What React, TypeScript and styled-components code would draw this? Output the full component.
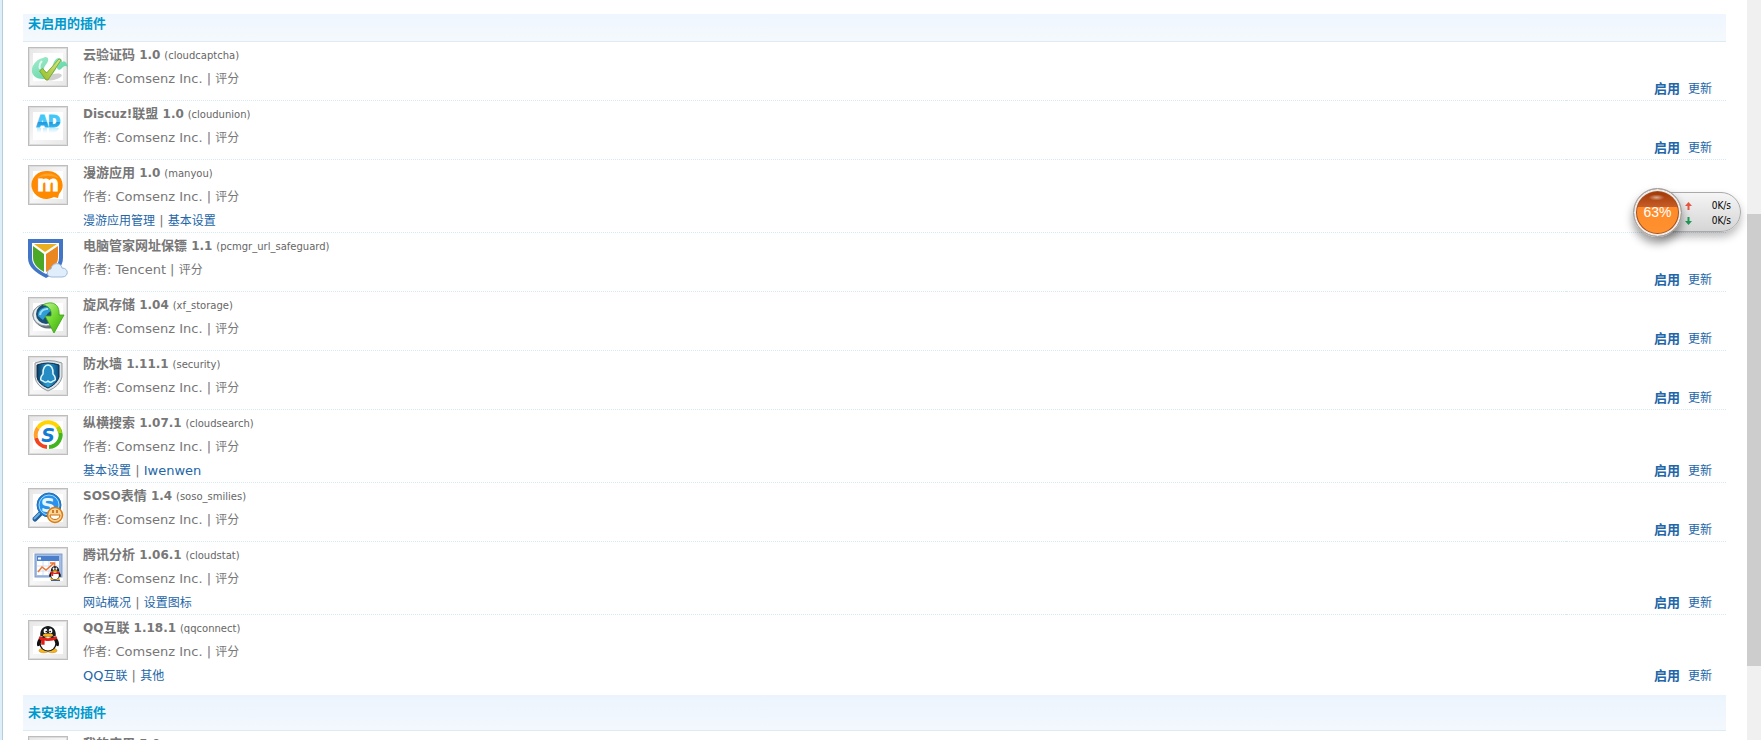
import React, { ReactNode } from "react";
import styled, { createGlobalStyle, css } from "styled-components";

const GlobalStyle = createGlobalStyle`
  html, body {
    margin: 0;
    background: #fff;
  }
  body {
    font-family: "DejaVu Sans", "Noto Sans CJK SC", sans-serif;
    font-size: 13px;
    line-height: 26px;
    color: #777;
  }
  * { box-sizing: border-box; }
`;

const Window = styled.div`
  display: flex;
  height: 100vh;
  overflow: hidden;
  position: relative;
`;

const LeftRail = styled.div`
  flex: none;
  width: 3px;
  background: #deeffa;
  border-right: 1px solid #b5cfd9;
`;

const Content = styled.main`
  flex: 1;
  min-width: 0;
  padding: 14px 21px 0 20px;
`;

const ScrollTrack = styled.div`
  flex: none;
  width: 14px;
  padding-top: 214px;
  background: #f0f0f0;
`;

const ScrollThumb = styled.div`
  height: 452px;
  background: #cdcdcd;
`;

const PluginTable = styled.table`
  width: 100%;
  border-collapse: separate;
  border-spacing: 0;
`;

const HeadCell = styled.th<{ $compact?: boolean }>`
  height: ${(p) => (p.$compact ? 28 : 36)}px;
  padding: ${(p) => (p.$compact ? "0 5px 7px" : "8px 5px 7px")};
  text-align: left;
  font-size: 13px;
  line-height: 20px;
  color: #09c;
  background: linear-gradient(
    ${(p) => (p.$compact ? "#eff6ff, #f4f9fc" : "#ebf4fc, #f0f6fe 50%, #f3f8fd")}
  );
  border-bottom: 1px solid #deeaf5;
`;

const rule = css<{ $last?: boolean }>`
  border-bottom: ${(p) => (p.$last ? "0" : "1px dotted #d5e8f5")};
`;

const IconCell = styled.td<{ $last?: boolean }>`
  ${rule}
  width: 55px;
  height: ${(p) => (p.$last ? 80 : 59)}px;
  padding: 5px 0 0 5px;
  vertical-align: top;
`;

const InfoCell = styled.td<{ $last?: boolean }>`
  ${rule}
  padding: 0 5px;
  vertical-align: top;
`;

const ActionCell = styled.td<{ $last?: boolean }>`
  ${rule}
  width: 160px;
  padding: 0 14px ${(p) => (p.$last ? 8 : 0)}px 0;
  vertical-align: bottom;
`;

const Line = styled.div`
  height: 24px;
  white-space: nowrap;
`;

const Title = styled(Line)`
  font-size: 12px;
`;

const Han = styled.span<{ $bold?: boolean }>`
  font-size: ${(p) => (p.$bold ? 13 : 12)}px;
`;

const Ident = styled.span`
  font-size: 10px;
  color: #666;
`;

const Link = styled.a<{ $bold?: boolean }>`
  color: #2366a8;
  text-decoration: none;
  font-weight: ${(p) => (p.$bold ? 700 : 400)};
`;

const Actions = styled.div`
  display: flex;
  justify-content: flex-end;
  gap: 8px;
  height: 24px;
`;

const Art = styled.svg`
  display: block;
  width: 40px;
  height: 40px;
`;

/* Chinese runs are set at their own size next to the Latin text. */
function Mixed({ text, bold }: { text: string; bold?: boolean }) {
  return (
    <>
      {text.split(/([\u4e00-\u9fff]+)/).map((part, i) =>
        i % 2 ? (
          <Han key={i} $bold={bold}>
            {part}
          </Han>
        ) : (
          part
        )
      )}
    </>
  );
}

function Framed({ children }: { children?: ReactNode }) {
  return (
    <Art viewBox="0 0 40 40" aria-hidden="true">
      <defs>
        <linearGradient id="frame" x1="0" y1="0" x2="1" y2="1">
          <stop offset="0" stopColor="#e6e6e6" />
          <stop offset=".5" stopColor="#f6f6f6" />
          <stop offset="1" stopColor="#e6e6e6" />
        </linearGradient>
      </defs>
      <rect x=".5" y=".5" width="39" height="39" fill="url(#frame)" stroke="#bdbdbd" />
      <rect x="1.5" y="1.5" width="37" height="37" fill="none" stroke="#dcdcdc" />
      <rect x="5" y="6" width="30" height="28" fill="#fff" />
      {children}
    </Art>
  );
}

const CaptchaIcon = () => (
  <Framed>
    <defs>
      <linearGradient id="leaf" x1="0" y1="0" x2="1" y2="1">
        <stop offset="0" stopColor="#a6ecd0" />
        <stop offset="1" stopColor="#4fd09a" />
      </linearGradient>
      <linearGradient id="tick" x1="1" y1="0" x2="0" y2="1">
        <stop offset="0" stopColor="#dbe887" />
        <stop offset="1" stopColor="#91bd22" />
      </linearGradient>
    </defs>
    <path d="M15 11c4-3 7 1 4 5-3 4-4 6-2 8 3 3 7-1 8-6 1-5 5-9 8-6 1 1 1 2 1 3 3-2 5 1 6 5-3-2-4-1-6 1-2 3-5 2-5-1-3 6-8 12-14 12-8 0-12-5-11-10 1-6 6-10 11-11Z" fill="url(#leaf)" />
    <path d="M14 14c-2 2-3 5-2 8" fill="none" stroke="#e2f9ef" strokeWidth="2" />
    <ellipse cx="25" cy="30" rx="9" ry="3" fill="#777" opacity=".35" transform="rotate(-12 25 30)" />
    <path d="M11.500 24l3-2.500 4 4.500L31 12l2 1-13 20h-2Z" fill="url(#tick)" stroke="#789d2a" strokeWidth=".8" />
  </Framed>
);

const AdIcon = () => (
  <Framed>
    <defs>
      <linearGradient id="ad" x1="0" y1="0" x2="0" y2="1">
        <stop offset="0" stopColor="#36c9f5" />
        <stop offset=".5" stopColor="#4cc5f7" />
        <stop offset=".55" stopColor="#2197dd" />
        <stop offset="1" stopColor="#35d0fa" />
      </linearGradient>
      <linearGradient id="adGlow" x1="0" y1="0" x2="0" y2="1">
        <stop offset="0" stopColor="#c3ebfa" />
        <stop offset="1" stopColor="#fff" />
      </linearGradient>
    </defs>
    <text x="20.500" y="20.500" textAnchor="middle" fontFamily="DejaVu Sans" fontWeight="700" fontSize="15" fill="url(#ad)" stroke="url(#ad)" strokeWidth="1">AD</text>
    <path d="M9 22h4v4H9zM15 22h4v5h-4zM21 22h10c-1 3-3 4-6 5h-4z" fill="url(#adGlow)" />
  </Framed>
);

const ManyouIcon = () => (
  <Framed>
    <path d="M20 6a15 14 0 0 1 11 23l-1 4-4-1A15 14 0 1 1 20 6Z" fill="#ff8a00" />
    <path d="M9 13A14 12 0 0 1 31 13Q20 9 9 13Z" fill="#ffa42a" />
    <text x="20" y="26" textAnchor="middle" fontFamily="DejaVu Sans" fontWeight="700" fontSize="21" fill="#fff" stroke="#fff" strokeWidth="1">m</text>
  </Framed>
);

const GuardIcon = () => (
  <Art viewBox="0 0 40 40" aria-hidden="true">
    <path d="M0 1h35v19c0 9-7 15-17 20C8 35 0 29 0 20Z" fill="#4275c6" />
    <path d="M4 5h27v15c0 7-6 12-13 16C10 32 4 27 4 20Z" fill="#fff" />
    <path d="M6 6h23l-12 8Z" fill="#eab020" />
    <path d="M5 8l11 8v18C8 29 5 25 5 19Z" fill="#4ca928" />
    <path d="M30 8l-12 8v18c9-5 12-9 12-15Z" fill="#ea8720" />
    <path d="M24 39c-6 0-6-7-1-8 1-7 10-7 11-1 7 0 7 9 0 9Z" fill="#e0edfa" stroke="#9fb9dc" />
  </Art>
);

const StorageIcon = () => (
  <Framed>
    <defs>
      <linearGradient id="arrow" x1="0" y1="0" x2="1" y2="1">
        <stop offset="0" stopColor="#c5f59a" />
        <stop offset=".5" stopColor="#6fd72f" />
        <stop offset="1" stopColor="#35a40d" />
      </linearGradient>
    </defs>
    <ellipse cx="18" cy="20" rx="14" ry="11" fill="#66727a" transform="rotate(25 18 20)" />
    <ellipse cx="18" cy="18" rx="13" ry="11" fill="#e8edef" stroke="#8b959b" />
    <circle cx="18" cy="17" r="10" fill="#1b4f74" />
    <path d="M10 19a8 8 0 0 1 14-6l-4 3-5 7Z" fill="#2f9ed8" />
    <path d="M12 18a7 7 0 0 1 8-6" fill="none" stroke="#9be0fa" strokeWidth="2" />
    <path d="M15 8c9-5 17-1 16 10h5L26 36 17 19h6c1-6-2-10-8-11Z" fill="url(#arrow)" stroke="#3ca315" strokeWidth=".8" />
  </Framed>
);

const SecurityIcon = () => (
  <Framed>
    <defs>
      <linearGradient id="shield" x1="0" y1="0" x2="1" y2="0">
        <stop offset="0" stopColor="#0a3b63" />
        <stop offset=".5" stopColor="#2ba2d8" />
        <stop offset="1" stopColor="#0d4f80" />
      </linearGradient>
    </defs>
    <path d="M7 7q13-5 27 0v14q-2 9-14 14Q8 30 7 21Z" fill="#dfe4e7" stroke="#8f989e" />
    <path d="M9 9q11-4 22 0v12q-2 7-11 11Q10 28 9 21Z" fill="url(#shield)" stroke="#0b2b47" />
    <path d="M15 25c-4 0-2-5 0-7-1-12 11-12 10 0 2 2 4 7 0 7-2 2-4 1-5 0-1 1-3 2-5 0Z" fill="#258dc4" stroke="#dff6ff" strokeWidth="1.500" />
  </Framed>
);

const SearchIcon = () => (
  <Framed>
    <g fill="none" strokeWidth="4">
      <path d="M10 13A12 12 0 0 1 31 14" stroke="#ffd400" />
      <path d="M31 14A12 12 0 0 1 21 32" stroke="#42b51f" />
      <path d="M19 32A12 12 0 0 1 8 23" stroke="#f04420" />
      <path d="M8 23A12 12 0 0 1 10 13" stroke="#ffa12a" />
      <path d="M30 12A12 12 0 0 1 32 18" stroke="#a8d20a" />
    </g>
    <circle cx="20" cy="20" r="10" fill="#fff" />
    <text x="20" y="27" textAnchor="middle" fontFamily="DejaVu Sans" fontStyle="italic" fontWeight="700" fontSize="19" fill="#137bd2">S</text>
  </Framed>
);

const SmileyIcon = () => (
  <Framed>
    <path d="M13 25l-6 6" stroke="#215d98" strokeWidth="5" strokeLinecap="round" />
    <path d="M12 25l-6 6" stroke="#63aee6" strokeWidth="2" />
    <circle cx="21" cy="17" r="12" fill="#2080d5" stroke="#2370b8" />
    <circle cx="21" cy="17" r="10" fill="#2992ec" stroke="#a5dcff" />
    <text x="20" y="24" textAnchor="middle" fontFamily="DejaVu Sans" fontWeight="700" fontSize="20" fill="#e8f7ff">S</text>
    <circle cx="27" cy="27" r="7.500" fill="#ffd596" stroke="#d87b12" strokeWidth="1.500" />
    <path d="M22 27h10c0 6-10 6-10 0Z" fill="#fff" stroke="#c66d0d" />
    <path d="M25 22v3M29 22v3" stroke="#b9620b" strokeWidth="1.500" />
  </Framed>
);

const Penguin = () => (
  <g>
    <ellipse cx="15" cy="36" rx="5.500" ry="2.500" fill="#f6b51c" stroke="#c87508" strokeWidth=".6" />
    <ellipse cx="25" cy="36" rx="5.500" ry="2.500" fill="#f6b51c" stroke="#c87508" strokeWidth=".6" />
    <path d="M12 19C7 23 6 29 8 31c2 0 3-2 4-4M28 19c5 4 6 10 4 12-2 0-3-2-4-4" fill="#111" />
    <ellipse cx="20" cy="27" rx="10.500" ry="10" fill="#161616" />
    <ellipse cx="20" cy="28" rx="8.500" ry="8" fill="#fff" />
    <path d="M11 19c-2-16 20-16 18 0Z" fill="#17191c" />
    <ellipse cx="17" cy="13" rx="2.200" ry="3" fill="#fff" />
    <ellipse cx="23" cy="13" rx="2.200" ry="3" fill="#fff" />
    <circle cx="18" cy="13.500" r="1" fill="#111" />
    <circle cx="22.500" cy="13.500" r="1" fill="#111" />
    <path d="M10 19q10 5 20 0l1 3q-8 4-15 2v5h-4v-5l-3-2Z" fill="#e21d16" />
    <ellipse cx="20" cy="18" rx="6" ry="2" fill="#f8b11c" />
  </g>
);

const StatIcon = () => (
  <Framed>
    <rect x="7" y="7" width="27" height="23" fill="#a5bde3" stroke="#7b9bcb" />
    <rect x="9" y="14" width="22" height="14" fill="#fff" />
    <rect x="9" y="9" width="22" height="5" fill="#4b7fcc" />
    <path d="M10 11.500h3" stroke="#fff" strokeWidth="2" />
    <path d="M15 14v14M21 14v14M27 14v14M9 19h22M9 24h22" stroke="#d0dff2" />
    <path d="M10 25l4-5 4 3 8-7M22 16h4.500v4" fill="none" stroke="#ee7630" strokeWidth="1.500" />
    <g transform="translate(18 16) scale(.45)">
      <Penguin />
    </g>
    <path d="M23 33.500h9" stroke="#43618b" />
  </Framed>
);

const QqIcon = () => (
  <Framed>
    <g transform="translate(3 0) scale(.85)">
      <Penguin />
    </g>
  </Framed>
);

interface Plugin {
  name: string;
  version: string;
  id: string;
  author?: string;
  icon: ReactNode;
  links?: string[];
  locked?: boolean;
}

const disabledPlugins: Plugin[] = [
  { name: "云验证码", version: "1.0", id: "cloudcaptcha", icon: <CaptchaIcon /> },
  { name: "Discuz!联盟", version: "1.0", id: "cloudunion", icon: <AdIcon /> },
  { name: "漫游应用", version: "1.0", id: "manyou", icon: <ManyouIcon />, links: ["漫游应用管理", "基本设置"], locked: true },
  { name: "电脑管家网址保镖", version: "1.1", id: "pcmgr_url_safeguard", author: "Tencent", icon: <GuardIcon /> },
  { name: "旋风存储", version: "1.04", id: "xf_storage", icon: <StorageIcon /> },
  { name: "防水墙", version: "1.11.1", id: "security", icon: <SecurityIcon /> },
  { name: "纵横搜索", version: "1.07.1", id: "cloudsearch", icon: <SearchIcon />, links: ["基本设置", "Iwenwen"] },
  { name: "SOSO表情", version: "1.4", id: "soso_smilies", icon: <SmileyIcon /> },
  { name: "腾讯分析", version: "1.06.1", id: "cloudstat", icon: <StatIcon />, links: ["网站概况", "设置图标"] },
  { name: "QQ互联", version: "1.18.1", id: "qqconnect", icon: <QqIcon />, links: ["QQ互联", "其他"] },
];

function PluginRow({ plugin, last }: { plugin: Plugin; last: boolean }) {
  return (
    <tr>
      <IconCell $last={last}>{plugin.icon}</IconCell>
      <InfoCell $last={last}>
        <Title>
          <b>
            <Mixed bold text={`${plugin.name} ${plugin.version}`} />
          </b>{" "}
          <Ident>({plugin.id})</Ident>
        </Title>
        <Line>
          <Mixed text={`作者: ${plugin.author ?? "Comsenz Inc."} | 评分`} />
        </Line>
        {plugin.links && (
          <Line>
            {plugin.links.map((label, i) => (
              <React.Fragment key={label}>
                {i > 0 && " | "}
                <Link href="#">
                  <Mixed text={label} />
                </Link>
              </React.Fragment>
            ))}
          </Line>
        )}
      </InfoCell>
      <ActionCell $last={last}>
        {!plugin.locked && (
          <Actions>
            <Link href="#" $bold>
              启用
            </Link>
            <Link href="#">
              <Mixed text="更新" />
            </Link>
          </Actions>
        )}
      </ActionCell>
    </tr>
  );
}

/* Floating memory and network monitor. */
const Monitor = styled.aside`
  position: absolute;
  top: 188px;
  right: 20px;
  display: flex;
  align-items: center;
  width: 108px;
  height: 48px;
`;

const MonitorBall = styled.div`
  position: relative;
  z-index: 1;
  flex: none;
  width: 49px;
  height: 49px;
  border: 1px solid #999;
  border-radius: 50%;
  background: radial-gradient(ellipse 8px 3px at 48% 18%, #fff8, #fff0),
    linear-gradient(#a43b08 8%, #c65c28 38%, #ff8a29 39%, #ff9230);
  background-clip: padding-box;
  box-shadow: inset 0 0 0 2px #ececec, inset 0 0 0 3px #a9501d, 0 6px 10px #0006;
  color: #fff;
  font: 14px/46px "Liberation Sans", sans-serif;
  text-align: center;
`;

const MonitorPanel = styled.div`
  flex: 1;
  height: 40px;
  margin-left: -24px;
  padding: 5px 9px 0 26px;
  border: 1px solid #aaa;
  border-radius: 0 20px 20px 0;
  background: linear-gradient(#f5f5f5, #d5d5d5);
  box-shadow: 0 5px 8px #0004;
`;

const Rate = styled.div`
  display: flex;
  align-items: center;
  justify-content: space-between;
  height: 15px;
  color: #000;
  font: 10px/15px "DejaVu Sans Condensed", "DejaVu Sans", sans-serif;
`;

function Arrow({ down }: { down?: boolean }) {
  return (
    <svg width="7" height="8" viewBox="0 0 7 8" aria-hidden="true">
      <path
        d={down ? "M2.500 0h2v4H7L3.500 8 0 4h2.500z" : "M3.500 0L7 4H4.500v4h-2V4H0z"}
        fill={down ? "#1f9a56" : "#e8543f"}
      />
    </svg>
  );
}

export default function App() {
  return (
    <Window>
      <GlobalStyle />
      <LeftRail />
      <Content>
        <PluginTable>
          <tbody>
            <tr>
              <HeadCell colSpan={3} $compact>
                未启用的插件
              </HeadCell>
            </tr>
            {disabledPlugins.map((plugin, i) => (
              <PluginRow key={plugin.id} plugin={plugin} last={i === disabledPlugins.length - 1} />
            ))}
            <tr>
              <HeadCell colSpan={3}>未安装的插件</HeadCell>
            </tr>
            <tr>
              <IconCell>
                <Framed />
              </IconCell>
              <InfoCell colSpan={2}>
                <Title>
                  <b>
                    <Mixed bold text="我的应用 5.0" />
                  </b>
                </Title>
              </InfoCell>
            </tr>
          </tbody>
        </PluginTable>
      </Content>
      <ScrollTrack>
        <ScrollThumb />
      </ScrollTrack>
      <Monitor>
        <MonitorBall>63%</MonitorBall>
        <MonitorPanel>
          <Rate>
            <Arrow />
            0K/s
          </Rate>
          <Rate>
            <Arrow down />
            0K/s
          </Rate>
        </MonitorPanel>
      </Monitor>
    </Window>
  );
}
